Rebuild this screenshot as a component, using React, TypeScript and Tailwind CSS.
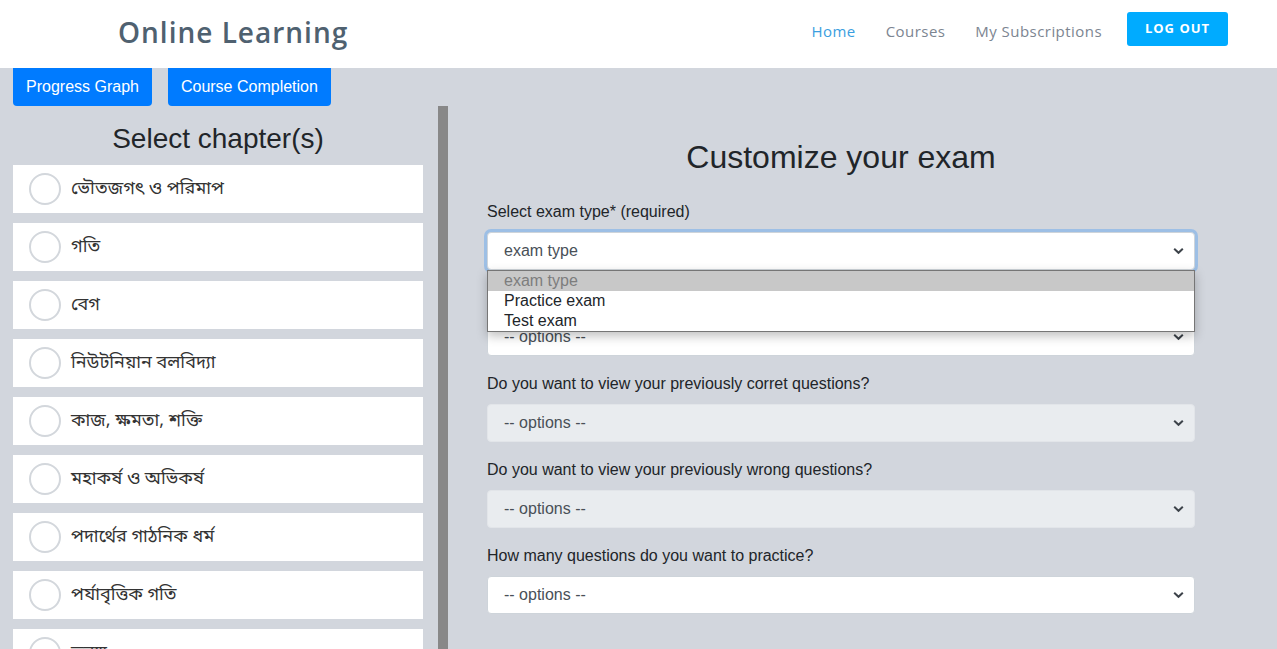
import React from 'react';

const chapters = [
  'ভৌতজগৎ ও পরিমাপ',
  'গতি',
  'বেগ',
  'নিউটনিয়ান বলবিদ্যা',
  'কাজ, ক্ষমতা, শক্তি',
  'মহাকর্ষ ও অভিকর্ষ',
  'পদার্থের গাঠনিক ধর্ম',
  'পর্যাবৃত্তিক গতি',
  'তরঙ্গ',
];

const Chevron = () => (
  <svg width="11" height="7" viewBox="0 0 11 7" className="absolute right-[10px] top-1/2 -translate-y-1/2">
    <path d="M1.2 1.2 L5.5 5.3 L9.8 1.2" fill="none" stroke="#3d434a" strokeWidth="2" />
  </svg>
);

const FakeSelect = ({ text, disabled, focused }: { text: string; disabled?: boolean; focused?: boolean }) => (
  <div
    className={
      'relative h-[38px] rounded-[4px] border flex items-center pl-[16px] text-[16px] text-[#495057] ' +
      (disabled ? 'bg-[#e9ecef] border-[#e2e5e9]' : 'bg-white border-[#ced4da]') +
      (focused ? ' border-[#80bdff] shadow-[0_0_0_3px_rgba(0,123,255,0.25)]' : '')
    }
  >
    {text}
    <Chevron />
  </div>
);

const App = () => {
  return (
    <div className="min-h-screen bg-[#d2d6dd] font-['Liberation_Sans',Arial,sans-serif] text-[#212529]">
      {/* Header */}
      <header className="h-[68px] bg-white flex items-center pb-[4px]">
        <div className="ml-[118px] font-['Open_Sans',sans-serif] font-semibold text-[28px] tracking-[1px] text-[#4f6170]">
          Online Learning
        </div>
        <nav className="ml-auto mr-[49px] flex items-center font-['Open_Sans',sans-serif] text-[15px] tracking-[0.45px]">
          <span className="text-[#3a9ee0] mb-[2px]">Home</span>
          <span className="ml-[30px] text-[#7c8591] mb-[2px]">Courses</span>
          <span className="ml-[30px] text-[#7c8591] mb-[2px]">My Subscriptions</span>
          <button className="ml-[25px] mb-[7px] w-[101px] h-[34px] rounded-[3px] bg-[#00abff] text-white text-[13px] font-bold tracking-[1px]">
            LOG OUT
          </button>
        </nav>
      </header>

      {/* Top buttons */}
      <div className="flex gap-[16px] px-[13px]">
        <button className="h-[38px] px-[13px] rounded-b-[4px] bg-[#007bff] text-white text-[16px]">Progress Graph</button>
        <button className="h-[38px] px-[13px] rounded-b-[4px] bg-[#007bff] text-white text-[16px]">Course Completion</button>
      </div>

      {/* Main */}
      <div className="flex">
        {/* Chapters */}
        <div className="ml-[13px] w-[410px]">
          <h3 className="mt-[16px] mb-[9px] text-center text-[28px] leading-[34px]">Select chapter(s)</h3>
          <div className="flex flex-col gap-[10px] pb-[20px]">
            {chapters.map((c) => (
              <div key={c} className="h-[48px] bg-white flex items-center pl-[16px]">
                <span className="w-[32px] h-[32px] rounded-full border-2 border-[#d3d7dc] bg-white" />
                <span className="ml-[10px] text-[18px] text-[#333] font-['Noto_Sans_Bengali','Lohit_Bengali','Noto_Sans',sans-serif]">
                  {c}
                </span>
              </div>
            ))}
          </div>
        </div>

        <div className="ml-[15px] w-[10px] bg-[#888888]" />

        {/* Exam form */}
        <div className="flex-1 pl-[39px]">
          <div className="w-[708px]">
            <h2 className="mt-[32px] mb-[24px] text-center text-[32px] leading-[38px]">Customize your exam</h2>

            <div className="mb-[16px]">
              <label className="block mb-[8px] text-[16px] leading-[24px]">Select exam type* (required)</label>
              <div className="relative">
                <FakeSelect text="exam type" focused />
                <div className="absolute left-0 right-0 top-[38px] z-10 bg-white border border-[#767676] shadow-[0_4px_10px_rgba(0,0,0,0.25)] text-[16px] leading-[20px] text-[#212529]">
                  <div className="bg-[#c8c8c8] text-[#7d7d7d] pl-[16px]">exam type</div>
                  <div className="pl-[16px]">Practice exam</div>
                  <div className="pl-[16px]">Test exam</div>
                </div>
              </div>
            </div>

            <div className="mb-[16px]">
              <label className="block mb-[8px] text-[16px] leading-[24px]">Do you want to view the solutions?</label>
              <FakeSelect text="-- options --" />
            </div>

            <div className="mb-[16px]">
              <label className="block mb-[8px] text-[16px] leading-[24px]">Do you want to view your previously corret questions?</label>
              <FakeSelect text="-- options --" disabled />
            </div>

            <div className="mb-[16px]">
              <label className="block mb-[8px] text-[16px] leading-[24px]">Do you want to view your previously wrong questions?</label>
              <FakeSelect text="-- options --" disabled />
            </div>

            <div className="mb-[16px]">
              <label className="block mb-[8px] text-[16px] leading-[24px]">How many questions do you want to practice?</label>
              <FakeSelect text="-- options --" />
            </div>
          </div>
        </div>
      </div>
    </div>
  );
};

export default App;
